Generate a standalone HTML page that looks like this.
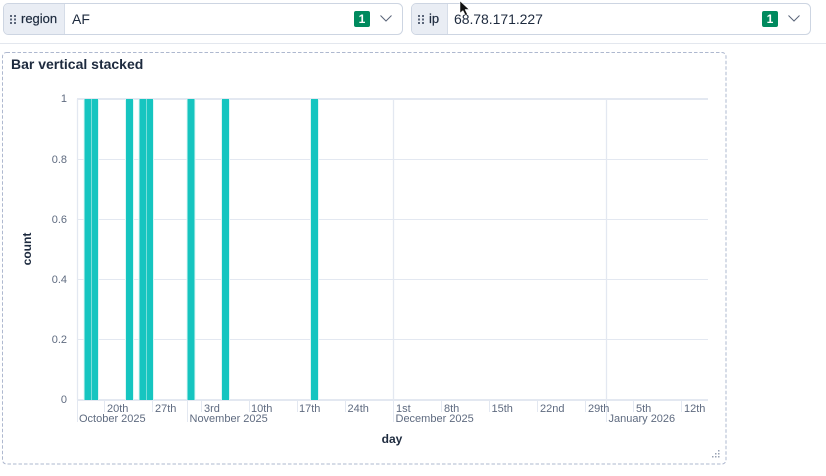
<!DOCTYPE html>
<html><head><meta charset="utf-8"><style>
html,body{margin:0;padding:0;background:#fff;width:826px;height:476px;overflow:hidden}
svg{display:block;font-family:"Liberation Sans",sans-serif}
.t{font-size:11px;fill:#5f6b80}
.g{stroke:#e3e8f1;stroke-width:1;fill:none}
.b{fill:#16c5c0}
.bo{fill:#dff6f5}
</style></head><body>
<svg width="826" height="476" viewBox="0 0 826 476" xmlns="http://www.w3.org/2000/svg">
<!-- control 1 -->
<rect x="3.500" y="3.500" width="399" height="31" rx="5" fill="#fff" stroke="#cdd5e2"/>
<path d="M8 4H64V34H8a4 4 0 0 1-4-4V8a4 4 0 0 1 4-4z" fill="#e9edf4"/>
<path d="M64.500 4V34" stroke="#d6dde8"/>
<g fill="#5a6579"><rect x="10" y="15" width="2" height="2"/><rect x="14" y="15" width="2" height="2"/><rect x="10" y="18.500" width="2" height="2"/><rect x="14" y="18.500" width="2" height="2"/><rect x="10" y="22" width="2" height="2"/><rect x="14" y="22" width="2" height="2"/></g>
<text x="21" y="23" font-size="13" fill="#1d2a3e" stroke="#1d2a3e" stroke-width=".2">region</text>
<text x="72" y="24" font-size="14" fill="#1d2a3e">AF</text>
<rect x="354" y="11" width="16" height="16" rx="2" fill="#008a5e"/>
<text x="362" y="23" font-size="12" font-weight="bold" fill="#fff" text-anchor="middle">1</text>
<path d="M380.500 15.500L386 21L391.500 15.500" fill="none" stroke="#5a6579" stroke-width="1"/>
<!-- control 2 -->
<rect x="411.500" y="3.500" width="399" height="31" rx="5" fill="#fff" stroke="#cdd5e2"/>
<path d="M416 4H447V34H416a4 4 0 0 1-4-4V8a4 4 0 0 1 4-4z" fill="#e9edf4"/>
<path d="M447.500 4V34" stroke="#d6dde8"/>
<g fill="#5a6579"><rect x="418" y="15" width="2" height="2"/><rect x="422" y="15" width="2" height="2"/><rect x="418" y="18.500" width="2" height="2"/><rect x="422" y="18.500" width="2" height="2"/><rect x="418" y="22" width="2" height="2"/><rect x="422" y="22" width="2" height="2"/></g>
<text x="429" y="23" font-size="13" fill="#1d2a3e" stroke="#1d2a3e" stroke-width=".2">ip</text>
<text x="454" y="24" font-size="14" fill="#1d2a3e" letter-spacing="-.05">68.78.171.227</text>
<rect x="762" y="11" width="16" height="16" rx="2" fill="#008a5e"/>
<text x="770" y="23" font-size="12" font-weight="bold" fill="#fff" text-anchor="middle">1</text>
<path d="M788.500 15.500L794 21L799.500 15.500" fill="none" stroke="#5a6579" stroke-width="1"/>
<!-- divider -->
<path d="M0 43.500H826" stroke="#e3e7ee"/>
<!-- panel -->
<rect x="2.500" y="52.500" width="723.500" height="411.500" rx="4" fill="#fff" stroke="#aeb8cf" stroke-dasharray="3.500 2"/>
<text x="11" y="69" font-size="14" font-weight="bold" fill="#1d2a3e">Bar vertical stacked</text>
<!-- grid -->
<path class="g" d="M77 159.500H708M77 219.500H708M77 279.500H708M77 339.500H708"/>
<path class="g" d="M77.500 99V400M393.500 99V400M606.500 99V400" style="stroke-width:1.300"/>
<path class="g" d="M77 99H708M77 400H708" style="stroke-width:2"/>
<!-- ticks -->
<path class="g" d="M104.500 400V412M152.500 400V412M201.500 400V412M249.500 400V412M297.500 400V412M345.500 400V412M441.500 400V412M489.500 400V412M537.500 400V412M585.500 400V412M633.500 400V412M681.500 400V412M77.500 400V422M187.500 400V422M393.500 400V422M606.500 400V422"/>
<!-- bars -->
<g class="bo"><rect x="83.500" y="99" width="15.500" height="301"/><rect x="125" y="99" width="9" height="301"/><rect x="138.500" y="99" width="15.500" height="301"/><rect x="186.500" y="99" width="9" height="301"/><rect x="221" y="99" width="9" height="301"/><rect x="310" y="99" width="9" height="301"/></g>
<g class="b"><rect x="84.500" y="99" width="6.500" height="301"/><rect x="91.500" y="99" width="6.500" height="301"/><rect x="126" y="99" width="7" height="301"/><rect x="139.500" y="99" width="6.500" height="301"/><rect x="146.500" y="99" width="6.500" height="301"/><rect x="187.500" y="99" width="7" height="301"/><rect x="222" y="99" width="7" height="301"/><rect x="311" y="99" width="7" height="301"/></g>
<!-- y labels -->
<g class="t" text-anchor="end"><text x="67" y="102">1</text><text x="67" y="163">0.8</text><text x="67" y="223">0.6</text><text x="67" y="283">0.4</text><text x="67" y="343">0.2</text><text x="67" y="403">0</text></g>
<!-- x labels -->
<g class="t"><text x="107" y="412">20th</text><text x="155" y="412">27th</text><text x="204" y="412">3rd</text><text x="251" y="412">10th</text><text x="299" y="412">17th</text><text x="347.500" y="412">24th</text><text x="396" y="412">1st</text><text x="444" y="412">8th</text><text x="491.500" y="412">15th</text><text x="540" y="412">22nd</text><text x="588" y="412">29th</text><text x="636" y="412">5th</text><text x="684" y="412">12th</text>
<text x="79" y="422">October 2025</text><text x="189.500" y="422">November 2025</text><text x="395.500" y="422">December 2025</text><text x="608.500" y="422">January 2026</text></g>
<!-- axis titles -->
<text x="392" y="443" font-size="12" font-weight="bold" fill="#1d2a3e" text-anchor="middle">day</text>
<text transform="translate(31 249) rotate(-90)" font-size="12" font-weight="bold" fill="#1d2a3e" text-anchor="middle">count</text>
<!-- resize handle -->
<g fill="#98a2b3"><rect x="718" y="450" width="1.500" height="1.500"/><rect x="715" y="453" width="1.500" height="1.500"/><rect x="718" y="453" width="1.500" height="1.500"/><rect x="712" y="456" width="1.500" height="1.500"/><rect x="715" y="456" width="1.500" height="1.500"/><rect x="718" y="456" width="1.500" height="1.500"/></g>
<!-- cursor -->
<path d="M460 1V13L463 10.500L465.500 15.500L467.500 14.500L465 9.500H469z" fill="#111" stroke="#fff" stroke-width=".5"/>
</svg>
</body></html>
